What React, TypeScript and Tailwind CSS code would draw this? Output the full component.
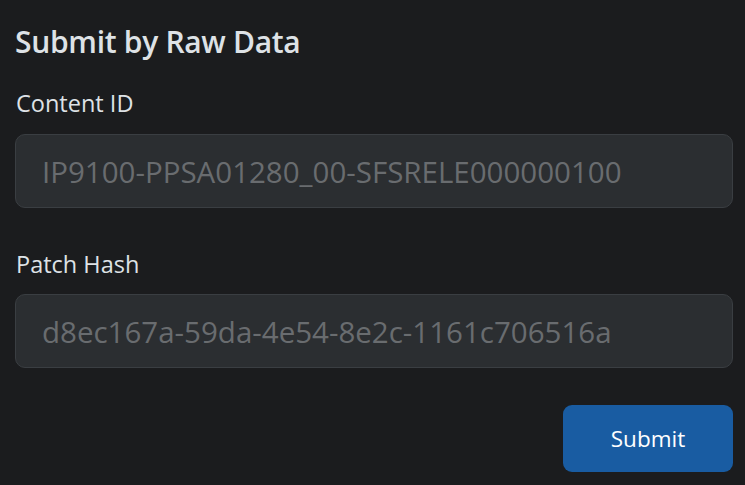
export default function App() {
  return (
    <div className="min-h-[485px] w-[745px] bg-[#1b1c1e] pl-[15px] pr-[12px] pt-[20px] font-['Open_Sans',sans-serif] text-[#dee2e6]">
      <h2 className="text-[30px] font-semibold leading-[44px] tracking-[-0.3px]">Submit by Raw Data</h2>
      <form className="mt-[22px] flex flex-col">
        <label className="mb-[14px] block pl-[1px] text-[23.5px] leading-[34px]">Content ID</label>
        <input
          placeholder="IP9100-PPSA01280_00-SFSRELE000000100"
          className="h-[74px] w-full rounded-[10px] border border-[#3a3e42] bg-[#2b2e31] px-[26px] text-[29.5px] text-[#dee2e6] outline-none placeholder:text-[#696c6f]"
        />
        <label className="mb-[13px] mt-[39px] block pl-[1px] text-[23.5px] leading-[34px]">Patch Hash</label>
        <input
          placeholder="d8ec167a-59da-4e54-8e2c-1161c706516a"
          className="h-[74px] w-full rounded-[10px] border border-[#3a3e42] bg-[#2b2e31] px-[26px] text-[29.5px] text-[#dee2e6] outline-none placeholder:text-[#696c6f]"
        />
        <div className="mt-[37px] flex justify-end">
          <button
            type="button"
            className="h-[67px] w-[170px] rounded-[9px] bg-[#195ca2] text-[22.5px] text-white"
          >
            Submit
          </button>
        </div>
      </form>
    </div>
  );
}
